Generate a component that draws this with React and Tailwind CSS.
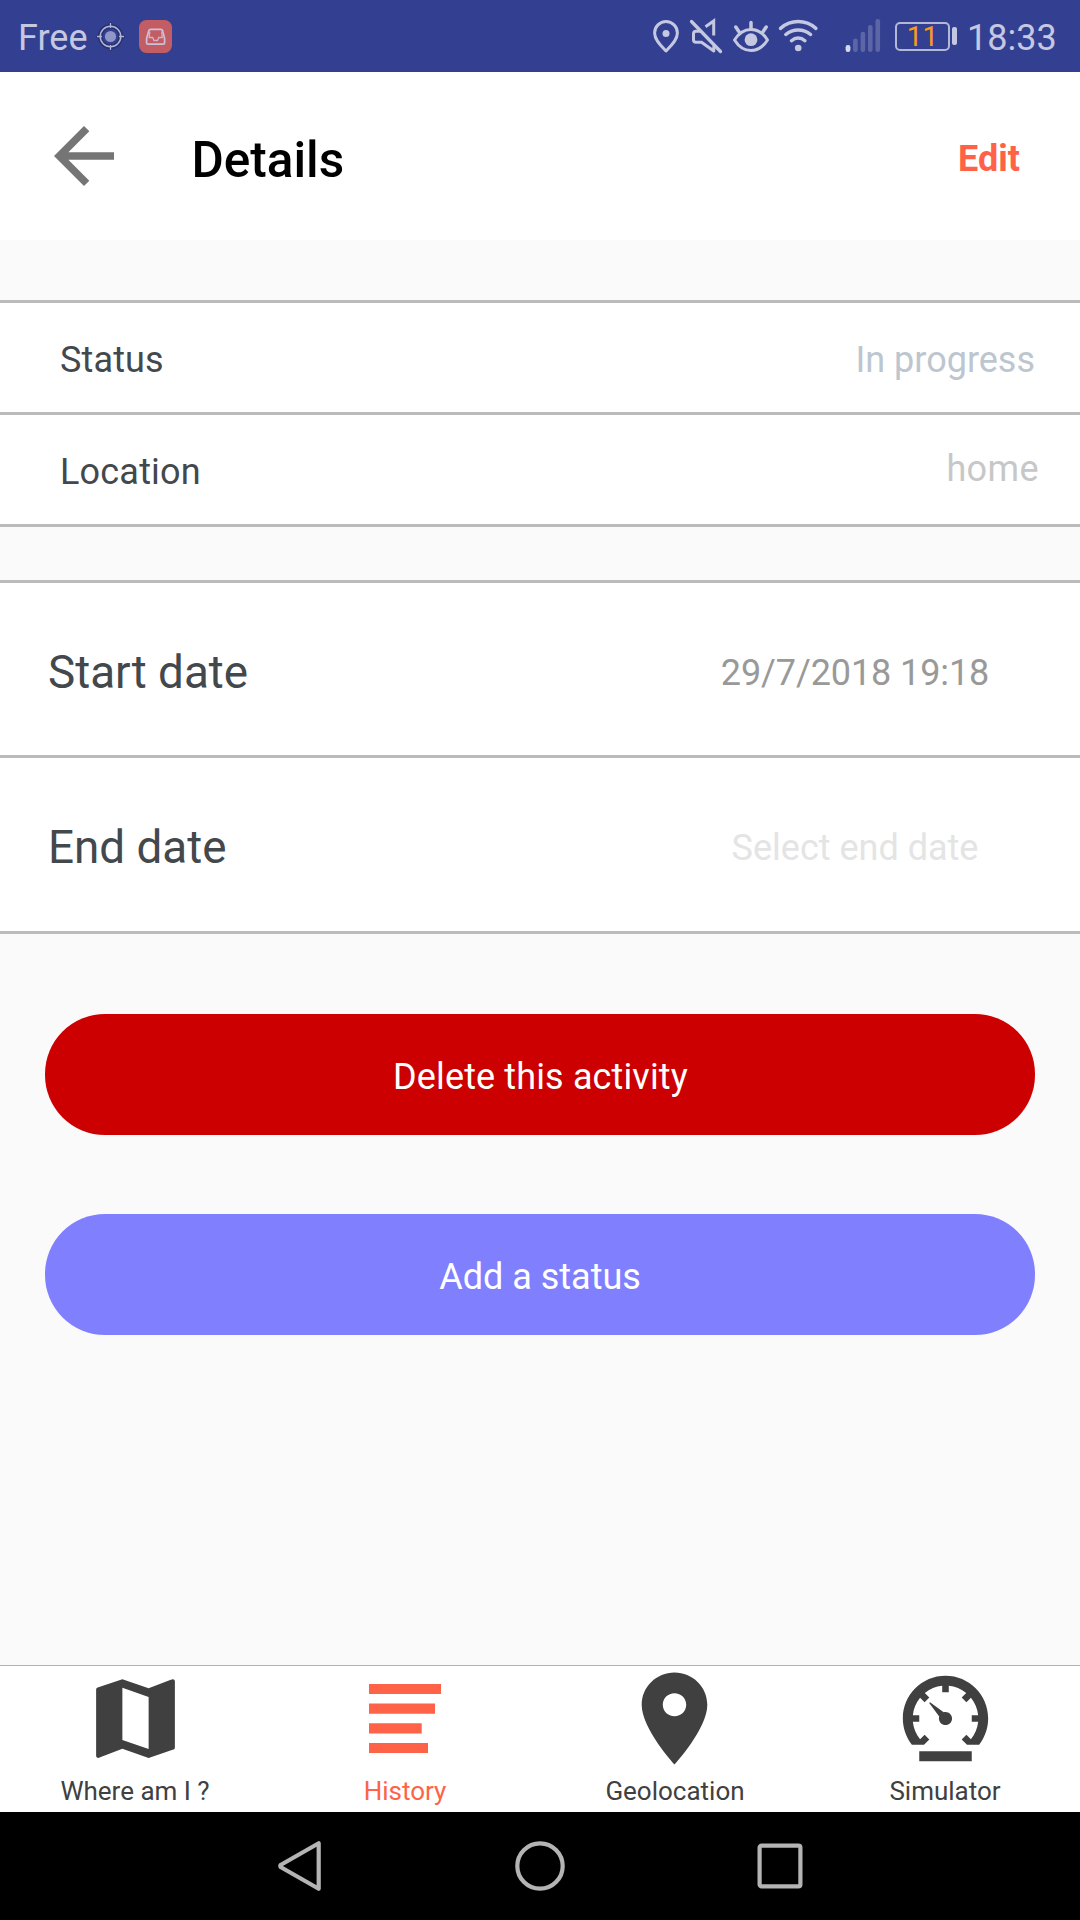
import { MdArrowBack } from "react-icons/md";
import { IoMdMap, IoMdPin, IoMdSpeedometer } from "react-icons/io";

const INK = "#c4c8e0";

function StatusBar() {
  return (
    <div className="flex h-[72px] items-center bg-[#333f90] pr-[23px] pl-[18px] text-[36px] text-[#c4c8e0]">
      <span className="mt-1 w-[78px] leading-[42px]">Free</span>
      <svg width="43" height="72" viewBox="96 0 43 72" fill="none">
        <circle cx="110.5" cy="36.5" r="10.3" stroke="#283170" strokeWidth="4.6" />
        <path d="M110.5 22.5v6M110.5 44.500v6M96.500 36.500h6M118.500 36.500h6" stroke="#283170" strokeWidth="3.400" />
        <circle cx="110.5" cy="36.5" r="5.6" fill="#9096c6" />
        <circle cx="110.5" cy="36.5" r="10.3" stroke="#b0b4d6" strokeWidth="1.5" />
        <path d="M110.5 23v5M110.5 45v5M97 36.500h5M119 36.500h5" stroke="#b0b4d6" strokeWidth="1.300" />
      </svg>
      <svg width="33" height="72" viewBox="139 0 33 72" fill="none">
        <rect x="139" y="20" width="33" height="33" rx="7.500" fill="#c25e63" />
        <path d="M150.700 29.300h10q1.500 0 1.900 1.500l2 7.700v4.200q0 1.500-1.500 1.500h-15q-1.500 0-1.500-1.500v-4.200l2.200-7.700q.4-1.500 1.900-1.500z" stroke="#cdc0da" strokeWidth="1.700" />
        <path d="M149.800 31.500l-.6 6h3.500l1.300 3h3.500l1.300-3h3.500l-.6-6" stroke="#cfb3c8" strokeWidth="1.300" />
      </svg>
      <div className="ml-auto flex items-center">
        <svg width="36" height="72" viewBox="650 0 36 72" fill="none">
          <path d="M666 51c-4.500-4.800-11.400-10.800-11.400-18a11.400 11.500 0 0 1 22.800 0c0 7.200-6.900 13.200-11.400 18z" stroke={INK} strokeWidth="3" strokeLinejoin="round" />
          <circle cx="666" cy="33.500" r="3.500" fill={INK} />
        </svg>
        <svg width="42" height="72" viewBox="686 0 42 72" fill="none" stroke={INK} strokeLinecap="round">
          <path d="M691.500 21.500L720.500 51.500" strokeWidth="3.300" />
          <path d="M699.500 31.300h-3.500q-2.500 0 -2.500 2.500v6q0 2.500 2.500 2.500h5.500l12.300 8.700v-4.500" strokeWidth="3" strokeLinejoin="round" />
          <path d="M705.500 26.800l8.200-5.800v14.500" strokeWidth="3" strokeLinecap="butt" />
        </svg>
        <svg width="46" height="72" viewBox="728 0 46 72" fill="none" stroke={INK} strokeLinecap="round">
          <path d="M734.500 40q6.500-10.500 16.500-10.500t16.500 10.500q-6.500 10.500-16.500 10.500t-16.500-10.500z" strokeWidth="3" strokeLinejoin="round" />
          <circle cx="751" cy="39.700" r="6.400" fill={INK} stroke="none" />
          <path d="M751 22.500v6.500M735.800 27l3.200 4.700M766.200 27l-3.200 4.700" strokeWidth="3.500" />
        </svg>
        <svg width="68" height="72" viewBox="774 0 68 72" fill="none" stroke={INK} strokeWidth="3.500" strokeLinecap="round">
          <path d="M780.500 28.300q8-6.700 17.700-6.700t17.700 6.700M785.800 34.500q5.500-4.600 12.400-4.600t12.400 4.600M791.500 40.700q3-2.600 6.700-2.600t6.700 2.600" />
          <circle cx="798.200" cy="48" r="3.300" fill={INK} stroke="none" />
        </svg>
        <svg width="50" height="72" viewBox="842 0 50 72">
          <rect x="845.600" y="45" width="4.800" height="7" rx="2.200" fill="#d5d8e9" />
          <g fill="#5c66a7">
            <rect x="853.100" y="38.500" width="4.600" height="13.500" rx="2.200" />
            <rect x="860.600" y="31.800" width="4.600" height="20.200" rx="2.200" />
            <rect x="868" y="25" width="4.600" height="27" rx="2.200" />
            <rect x="875.500" y="19" width="4.600" height="33" rx="2.200" />
          </g>
        </svg>
        <div className="mr-[10px] ml-[3px] flex items-center gap-0.5">
          <div className="flex h-[29px] w-[55px] items-center justify-center rounded-[5px] border-2 border-[#b3b8d7] text-[28px] leading-[29px] text-[#f99a1c]">
            11
          </div>
          <div className="h-[18px] w-[5px] rounded-[2px] bg-[#c4c8e0]" />
        </div>
        <span className="mt-1 w-[90px] leading-[42px]">18:33</span>
      </div>
    </div>
  );
}

function Header() {
  return (
    <header className="flex h-[168px] items-center bg-white pr-[60px] pl-[39px]">
      <MdArrowBack size={90} className="text-[#757575]" />
      <h1 className="mt-2 ml-[62.5px] text-[49.5px] leading-[60px] font-medium text-black">Details</h1>
      <span className="mt-1.5 ml-auto text-[36px] leading-[42px] font-bold text-[#ff6347]">Edit</span>
    </header>
  );
}

function Section({ children }) {
  return <section className="divide-y-3 divide-[#bbbbbb] border-y-3 border-[#bbbbbb] bg-white">{children}</section>;
}

function TabItem({ label, active, children }) {
  return (
    <div className={active ? "flex flex-1 flex-col items-center text-[#ff6347]" : "flex flex-1 flex-col items-center text-[#404040]"}>
      {children}
      <span className="mt-0.5 text-[26px] leading-[36px]">{label}</span>
    </div>
  );
}

function SystemNav() {
  return (
    <div className="flex h-[108px] items-center justify-center gap-[180px] bg-black">
      <svg width="60" height="60" viewBox="0 0 60 60" fill="none" stroke="#b4b4b4" strokeWidth="4.200" strokeLinejoin="round">
        <path d="M48.700 7.200v45.600L11 31.300q-1.500-1.300 0-2.600z" />
      </svg>
      <svg width="60" height="60" viewBox="0 0 60 60" fill="none" stroke="#b4b4b4" strokeWidth="4.200">
        <circle cx="30" cy="30" r="22.700" />
      </svg>
      <svg width="60" height="60" viewBox="0 0 60 60" fill="none" stroke="#b4b4b4" strokeWidth="4.200">
        <rect x="9.600" y="9.600" width="40.800" height="40.800" rx="2" />
      </svg>
    </div>
  );
}

export default function App() {
  return (
    <div className="flex h-[1920px] w-[1080px] flex-col bg-[#fafafa] font-[Roboto,sans-serif]">
      <StatusBar />
      <Header />

      <main className="flex flex-1 flex-col pt-[60px]">
        <Section>
          <div className="flex h-28 items-center pr-[45px] pl-[60px] text-[36px] leading-[42px]">
            <span className="mt-[5px] tracking-[0.15px] text-[#43484d]">Status</span>
            <span className="mt-[5px] ml-auto text-[#bdc6cf]">In progress</span>
          </div>
          <div className="flex h-[109px] items-center pr-[41px] pl-[60px] text-[36px] leading-[42px]">
            <span className="mt-[5px] tracking-[0.2px] text-[#43484d]">Location</span>
            <span className="mb-px ml-auto tracking-[0.4px] text-[#c7c7c7]">home</span>
          </div>
        </Section>

        <div className="h-[53px]" />

        <Section>
          <div className="flex h-[175px] items-center justify-between pr-[45px] pl-12">
            <span className="mt-[7px] text-[45.8px] leading-[54px] text-[#43484d]">Start date</span>
            <span className="mt-2 w-[360px] text-center text-[36px] leading-[42px] tracking-[-0.1px] text-[#999999]">29/7/2018 19:18</span>
          </div>
          <div className="flex h-[173px] items-center justify-between pr-[45px] pl-12">
            <span className="mt-1.5 text-[45.8px] leading-[54px] text-[#43484d]">End date</span>
            <span className="mt-[7px] w-[360px] text-center text-[36px] leading-[42px] text-[#e4e4e4]">Select end date</span>
          </div>
        </Section>

        <div className="mt-20 flex flex-col gap-[79px] px-[45px] text-[36px] leading-[42px] text-white">
          <button className="h-[121px] rounded-[60px] bg-[#cc0000] pt-[5px] pl-px tracking-[0.13px]">Delete this activity</button>
          <button className="h-[121px] rounded-[60px] bg-[#8080ff] pt-[5px]">Add a status</button>
        </div>
      </main>

      <nav className="flex h-[147px] border-t border-[#b2b2b2] bg-white">
        <TabItem label="Where am I ?">
          <IoMdMap size={105} />
        </TabItem>
        <TabItem label="History" active>
          <svg width="105" height="105" viewBox="0 0 105 105" fill="currentColor" className="mr-px">
            <path d="M17 18h72v10h-72zM17 37.500h66v10.200h-66zM17 57.200h52.700v10.200h-52.700zM17 77h59v10h-59z" />
          </svg>
        </TabItem>
        <TabItem label="Geolocation">
          <IoMdPin size={105} className="mr-px" />
        </TabItem>
        <TabItem label="Simulator">
          <IoMdSpeedometer size={105} />
        </TabItem>
      </nav>
      <SystemNav />
    </div>
  );
}
